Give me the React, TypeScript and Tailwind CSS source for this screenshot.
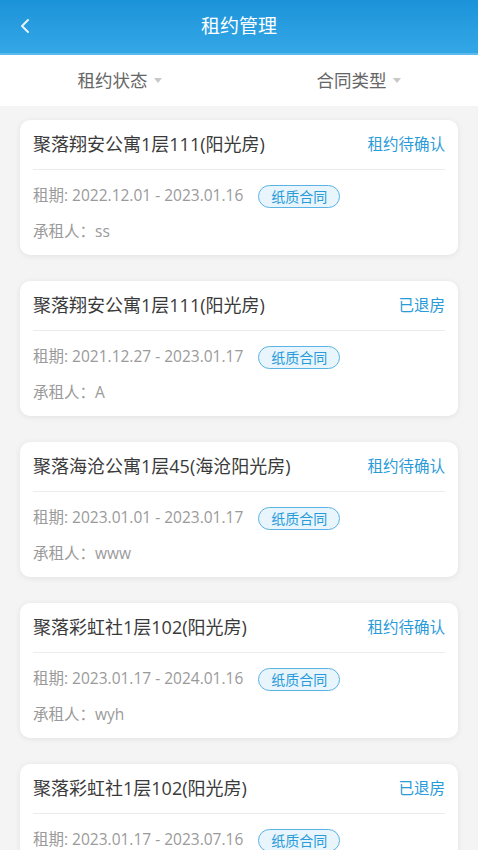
import React from "react";

type Lease = {
  title: string;
  status: string;
  period: string;
  tenant: string;
};

const leases: Lease[] = [
  { title: "聚落翔安公寓1层111(阳光房)", status: "租约待确认", period: "2022.12.01 - 2023.01.16", tenant: "ss" },
  { title: "聚落翔安公寓1层111(阳光房)", status: "已退房", period: "2021.12.27 - 2023.01.17", tenant: "A" },
  { title: "聚落海沧公寓1层45(海沧阳光房)", status: "租约待确认", period: "2023.01.01 - 2023.01.17", tenant: "www" },
  { title: "聚落彩虹社1层102(阳光房)", status: "租约待确认", period: "2023.01.17 - 2024.01.16", tenant: "wyh" },
  { title: "聚落彩虹社1层102(阳光房)", status: "已退房", period: "2023.01.17 - 2023.07.16", tenant: "lx" },
];

function Caret() {
  return <span className="ml-1.5 inline-block border-x-[4px] border-t-[5px] border-x-transparent border-t-[#c8c8c8]" />;
}

export default function App() {
  return (
    <div
      className="h-[850px] w-[478px] overflow-hidden bg-[#f4f4f4]"
      style={{ fontFamily: '"Open Sans", "Noto Sans CJK SC", sans-serif' }}
    >
      {/* Header */}
      <div className="relative flex h-[55px] items-center justify-center border-b-[2px] border-[#5bbbef] bg-gradient-to-b from-[#1b93d9] to-[#33a7e6]">
        <svg className="absolute left-[19px] top-[18px] h-[16px] w-[12px]" viewBox="0 0 12 16" fill="none">
          <path d="M9 2 L3 8 L9 14" stroke="#e6f4fd" strokeWidth="2" strokeLinecap="round" strokeLinejoin="round" />
        </svg>
        <span className="text-[19px] text-white">租约管理</span>
      </div>

      {/* Filters */}
      <div className="flex h-[51px] items-center bg-white text-[17.5px] text-[#666]">
        <div className="flex w-1/2 items-center justify-center">
          租约状态
          <Caret />
        </div>
        <div className="flex w-1/2 items-center justify-center">
          合同类型
          <Caret />
        </div>
      </div>

      {/* List */}
      <div className="flex flex-col gap-[26px] px-[20px] pt-[14px]">
        {leases.map((l, i) => (
          <div key={i} className="h-[135px] rounded-[10px] bg-white px-[13px] shadow-[0_1px_6px_rgba(0,0,0,0.08)]">
            <div className="flex h-[50px] items-center justify-between border-b border-[#ececec]">
              <span className="text-[18px] text-[#3a3a3a]">{l.title}</span>
              <span className="text-[15.5px] text-[#2a9bd9]">{l.status}</span>
            </div>
            <div className="mt-[14px] flex h-[24px] items-center text-[15.5px] text-[#9a9a9a]">
              <span>租期: {l.period}</span>
              <span className="ml-[15px] flex h-[23px] items-center rounded-full border-[1.5px] border-[#5ab3e3] bg-[#e8f5fd] px-[12px] text-[14px] text-[#2a9bd9]">
                纸质合同
              </span>
            </div>
            <div className="mt-[12px] text-[15.5px] text-[#9a9a9a]">承租人：{l.tenant}</div>
          </div>
        ))}
      </div>
    </div>
  );
}
